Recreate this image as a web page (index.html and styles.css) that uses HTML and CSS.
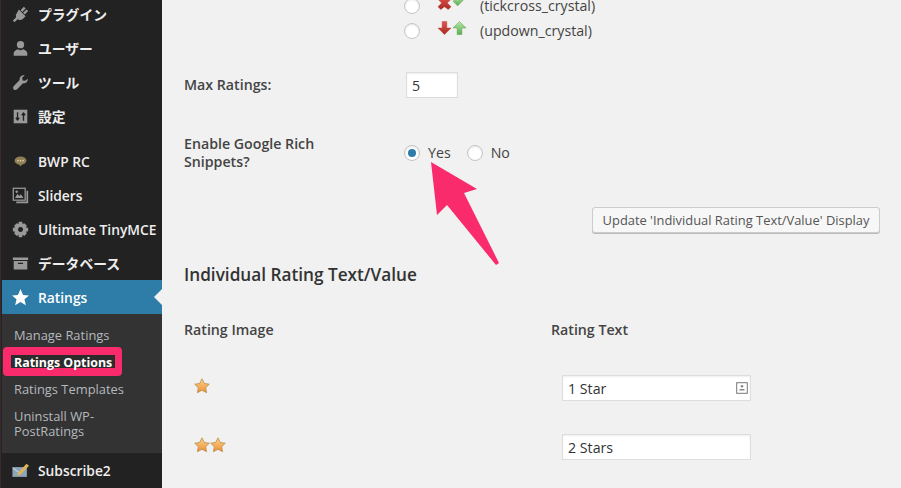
FILE: index.html
```html
<!DOCTYPE html>
<html lang="ja">
<head>
<meta charset="utf-8">
<title>Ratings Options</title>
<link rel="stylesheet" href="styles.css">
</head>
<body>
<svg class="defs" aria-hidden="true">
  <defs>
    <linearGradient id="gold" x1="0" y1="0" x2="0" y2="1"><stop offset="0" stop-color="#fbd48a"/><stop offset="1" stop-color="#ee8f35"/></linearGradient>
    <linearGradient id="redg" x1="0" y1="0" x2="0" y2="1"><stop offset="0" stop-color="#e2554a"/><stop offset="1" stop-color="#a82a24"/></linearGradient>
    <linearGradient id="greeng" x1="0" y1="0" x2="0" y2="1"><stop offset="0" stop-color="#b8e8a4"/><stop offset="1" stop-color="#58ad52"/></linearGradient>
  </defs>
</svg>
<div class="page">
  <nav class="sidebar">
    <ul class="menu first">
      <li class="item"><svg class="ico" viewBox="0 0 20 20"><path d="M8 4l8 8-3 3c-2 2-5 2-7 0s-2-5 0-7zM10 5l4-4 2 2-4 4zM13 8l4-4 2 2-4 4zM6 12l2 2-5 5-2-2z"/></svg><span>プラグイン</span></li>
      <li class="item"><svg class="ico" viewBox="0 0 20 20"><circle cx="10" cy="5.500" r="4.300"/><path d="M2 18.500v-3c0-2 3-4 5-4.500 2 1.500 4 1.500 6 0 2 .5 5 2.500 5 4.500v3z"/></svg><span>ユーザー</span></li>
      <li class="item"><svg class="ico" viewBox="0 0 20 20"><path d="M18.500 5.500c.5 3-2 6-5.500 5.500L6 18c-1.200 1.200-3 1.200-4 .2s-1-2.800.2-4L9 7C8.500 3.500 11.500 1 15 1.500L12 4.500l.5 3 3 .5z"/></svg><span>ツール</span></li>
      <li class="item"><svg class="ico" viewBox="0 0 20 20"><rect x="2" y="2" width="16" height="16"/><path class="cut" d="M6.500 5v9M4.500 11.500l2 2.500 2-2.500M13.500 15V6M11.500 8.500l2-2.500 2 2.500"/></svg><span>設定</span></li>
    </ul>
    <ul class="menu second">
      <li class="item"><svg class="ico" viewBox="0 0 20 20"><ellipse class="bubble" cx="10" cy="9" rx="7" ry="4.800"/><path class="bubble" d="M8 13l2 3 2-3z"/><circle class="dots" cx="7" cy="9" r="1"/><circle class="dots" cx="10" cy="9" r="1"/><circle class="dots" cx="13" cy="9" r="1"/></svg><span>BWP RC</span></li>
      <li class="item"><svg class="ico" viewBox="0 0 20 20"><rect class="frame" x="1.500" y="1.500" width="14" height="14"/><path d="M3.500 13l3-5 2 2.500 2-2 3 4.500zM5.500 4a1.500 1.500 0 1 0 .1 0zM17 4.500h2V19H5v-2h12z"/></svg><span>Sliders</span></li>
      <li class="item"><svg class="ico" viewBox="0 0 20 20"><path fill-rule="evenodd" d="M8 1h4l.5 2.500 2-1 3 3-1.200 2 2.700.5v4l-2.700.5 1.200 2-3 3-2-1.200L12 19H8l-.5-2.700-2 1.200-3-3 1.200-2L1 12V8l2.700-.5-1.200-2 3-3 2 1zM10 7a3 3 0 1 0 .1 0z"/></svg><span>Ultimate TinyMCE</span></li>
      <li class="item"><svg class="ico" viewBox="0 0 20 20"><path fill-rule="evenodd" d="M1 3h18v3H1zM2 7h16v10H2zM7 9v1.500h6V9z"/></svg><span>データベース</span></li>
      <li class="item current"><svg class="ico" viewBox="0 0 20 20"><path d="M10 0l3 7 7 .5-5.300 4.600L16.300 19 10 15.300 3.700 19l1.600-6.900L0 7.500 7 7z"/></svg><span>Ratings</span></li>
    </ul>
    <ul class="submenu">
      <li class="subitem">Manage Ratings</li>
      <li class="subitem active"><span class="mark"></span><span class="subtext">Ratings Options</span></li>
      <li class="subitem">Ratings Templates</li>
      <li class="subitem">Uninstall WP-<br>PostRatings</li>
    </ul>
    <ul class="menu">
      <li class="item"><svg class="ico" viewBox="0 0 20 20"><rect class="env" x="0.500" y="6" width="17" height="11.500"/><path class="env-line" d="M1 7l8 6 8-6"/><path class="pencil" d="M7 13L17 2l3 2.500-10 10.500-4 1z"/></svg><span>Subscribe2</span></li>
    </ul>
  </nav>

  <main class="content">
    <div class="choice">
      <span class="radio"></span>
      <span class="pair">
        <svg class="mini" viewBox="0 0 16 16"><path class="red" d="M1 4l3-3 4 3 4-3 3 3-4 4 4 4-3 3-4-3-4 3-3-3 4-4z"/></svg>
        <svg class="mini" viewBox="0 0 16 16"><path class="green" d="M1 6l3-2 2 2 6-6 3 2-9 9z"/></svg>
      </span>
      <span class="choice-name">(tickcross_crystal)</span>
    </div>
    <div class="choice">
      <span class="radio"></span>
      <span class="pair">
        <svg class="mini" viewBox="0 0 16 16"><path class="red" d="M5.500 1h5v7H15l-7 7-7-7h4.500z"/></svg>
        <svg class="mini" viewBox="0 0 16 16"><path class="green" d="M8 1l7 7h-4.500v7h-5V8H1z"/></svg>
      </span>
      <span class="choice-name">(updown_crystal)</span>
    </div>

    <div class="field max">
      <label class="label">Max Ratings:</label>
      <input class="text-input short" type="text" value="5">
    </div>

    <div class="field rich">
      <label class="label two-line">Enable Google Rich<br>Snippets?</label>
      <div class="radios">
        <span class="radio on"></span><span class="radio-text">Yes</span>
        <span class="radio"></span><span class="radio-text">No</span>
      </div>
    </div>

    <button class="button" type="button">Update 'Individual Rating Text/Value' Display</button>

    <h2 class="heading">Individual Rating Text/Value</h2>

    <div class="rating-grid head">
      <strong class="col-title">Rating Image</strong>
      <strong class="col-title">Rating Text</strong>
    </div>
    <div class="rating-grid row-one">
      <span class="stars">
        <svg class="star" viewBox="0 0 16 16"><path d="M8 .8l2.300 4.600 5 .8-3.600 3.500.9 5L8 12.300l-4.600 2.400.9-5L.7 6.200l5-.8z"/></svg>
      </span>
      <span class="input-wrap">
        <input class="text-input wide" type="text" value="1 Star">
        <svg class="contact" viewBox="0 0 12 12"><rect x=".7" y=".7" width="10.600" height="10.600"/><circle cx="6" cy="4.300" r="1.300"/><path d="M3.500 7h5v1.500h-5z"/></svg>
      </span>
    </div>
    <div class="rating-grid row-two">
      <span class="stars">
        <svg class="star" viewBox="0 0 16 16"><path d="M8 .8l2.300 4.600 5 .8-3.600 3.500.9 5L8 12.300l-4.600 2.400.9-5L.7 6.200l5-.8z"/></svg>
        <svg class="star" viewBox="0 0 16 16"><path d="M8 .8l2.300 4.600 5 .8-3.600 3.500.9 5L8 12.300l-4.600 2.400.9-5L.7 6.200l5-.8z"/></svg>
      </span>
      <span class="input-wrap">
        <input class="text-input wide" type="text" value="2 Stars">
      </span>
    </div>

    <svg class="arrow" viewBox="0 0 80 110"><path d="M6 2L52 29 39 33 74 103 71 105 22 45 12 55z"/></svg>
  </main>
</div>
</body>
</html>
```

FILE: styles.css
```css
* { box-sizing: border-box; }

html, body {
  margin: 0;
  height: 488px;
  overflow: hidden;
  background: #f1f1f1;
  font-family: "Open Sans", "Noto Sans CJK JP", sans-serif;
  color: #444;
}

.defs {
  display: block;
  width: 0;
  height: 0;
}

.page {
  display: flex;
  height: 488px;
  overflow: hidden;
}

/* Sidebar */
.sidebar {
  flex: 0 0 162px;
  background: #222;
  border-left: 1px solid #3a2a2e;
  color: #eee;
}

.menu, .submenu {
  list-style: none;
  margin: 0;
  padding: 0;
}

.menu.first { margin-top: -3px; }
.menu.second { margin-top: 11px; }

.item {
  display: flex;
  align-items: center;
  gap: 9px;
  height: 34px;
  padding-left: 11px;
  font-size: 13.800px;
  font-weight: 600;
  white-space: nowrap;
}

.ico {
  flex: 0 0 17px;
  width: 17px;
  height: 17px;
  fill: #999;
}

.cut {
  fill: none;
  stroke: #222;
  stroke-width: 1.600;
}

.frame {
  fill: none;
  stroke: #999;
  stroke-width: 1.500;
}

.bubble { fill: #8f7f55; }
.dots { fill: #d9cda8; }
.env { fill: #8fa4b8; }
.env-line { fill: none; stroke: #dfe8ee; stroke-width: 1; }
.pencil { fill: #d9b45c; }

.item.current {
  position: relative;
  background: #2e7ca8;
  color: #fff;
  margin-left: 1px;
  padding-left: 10px;
}

.item.current .ico { fill: #fff; }

.item.current::after {
  content: "";
  position: absolute;
  right: 0;
  top: 9px;
  border: 8px solid transparent;
  border-right-color: #f1f1f1;
  border-left-width: 0;
}

.submenu {
  background: #333;
  margin-left: 1px;
  padding: 8px 0 8px 12px;
  height: 139px;
  color: #b4b9be;
  font-size: 12.900px;
  line-height: 15px;
}

.subitem {
  position: relative;
  padding: 6px 0;
}

.subitem.active {
  color: #fff;
  font-size: 12.400px;
  font-weight: 700;
}

.subtext { position: relative; }

.mark {
  position: absolute;
  left: -11px;
  top: -2px;
  width: 119px;
  height: 29px;
  border-style: solid;
  border-color: #f92b6d;
  border-width: 8px 7px 8px 8px;
  border-radius: 4px;
  background: #2b2b2b;
}

/* Content */
.content {
  position: relative;
  flex: 1;
  display: flex;
  flex-direction: column;
  padding-left: 22px;
  font-size: 14.200px;
  margin-top: -7px;
}

.choice {
  display: flex;
  align-items: center;
  height: 25px;
  padding-left: 220px;
}

.radio {
  flex: 0 0 16px;
  width: 16px;
  height: 16px;
  border: 1px solid #c4c4c4;
  border-radius: 50%;
  background: #fff;
  box-shadow: inset 0 1px 2px rgba(0,0,0,.1);
  position: relative;
}

.radio.on::after {
  content: "";
  position: absolute;
  left: 3px;
  top: 3px;
  width: 8px;
  height: 8px;
  border-radius: 50%;
  background: #2e7ca8;
}

.pair {
  display: flex;
  margin-left: 17px;
  width: 43px;
  position: relative;
  top: -3px;
}

.mini { width: 15px; height: 16px; }
.red { fill: url(#redg); stroke: #a83a30; stroke-width: .4; }
.green { fill: url(#greeng); stroke: #5a9c4c; stroke-width: .5; }

.choice-name { white-space: nowrap; }

.field {
  display: flex;
  align-items: center;
}

.field.max { margin-top: 29px; }
.field.rich { margin-top: 37px; height: 35px; }

.label {
  flex: 0 0 220px;
  font-weight: 600;
  line-height: 18px;
}

.text-input {
  height: 26px;
  border: 1px solid #ddd;
  background: #fff;
  box-shadow: inset 0 1px 2px rgba(0,0,0,.07);
  padding: 0 5px;
  color: #333;
  font: 14.200px "Open Sans", sans-serif;
}

.short { width: 52px; margin-left: 2px; }
.wide { width: 189px; display: block; }

.radios {
  display: flex;
  align-items: center;
}

.radio-text { margin: 0 16px 0 8px; }

.button {
  align-self: flex-end;
  width: 288px;
  height: 26px;
  margin: 37px 21px 0 0;
  padding: 0;
  border: 1px solid #ccc;
  border-radius: 3px;
  background: #f7f7f7;
  box-shadow: 0 1px 0 #bbb;
  color: #555;
  font: 12.900px "Open Sans", sans-serif;
}

.heading {
  margin: 30px 0 0;
  font-size: 17.200px;
  line-height: 24px;
  font-weight: 600;
  color: #333;
}

.rating-grid {
  display: grid;
  grid-template-columns: 367px 1fr;
  align-items: center;
}

.rating-grid.head { margin-top: 32px; height: 20px; }
.rating-grid.row-one { margin-top: 36px; }
.rating-grid.row-two { margin-top: 33px; }

.col-title { font-weight: 600; font-size: 14.200px; }

.stars {
  display: flex;
  padding-left: 10px;
  height: 26px;
  align-items: center;
  position: relative;
  top: -2px;
}

.star {
  width: 16px;
  height: 16px;
  fill: url(#gold);
  stroke: #b08545;
  stroke-width: .7;
}

.input-wrap {
  position: relative;
  display: block;
  width: 189px;
  margin-left: 11px;
}

.contact {
  position: absolute;
  right: 3px;
  top: 7px;
  width: 12px;
  height: 12px;
  fill: #888;
}

.contact rect { fill: none; stroke: #777; }

.arrow {
  position: absolute;
  left: 263px;
  top: 167px;
  width: 80px;
  height: 110px;
  fill: #f92b6d;
}
```
